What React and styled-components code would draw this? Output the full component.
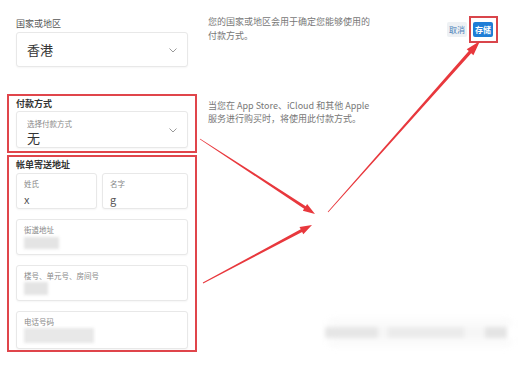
import React from 'react';
import styled, { createGlobalStyle } from 'styled-components';

const GlobalStyle = createGlobalStyle`
  html, body { margin: 0; padding: 0; background: #fff; }
  body { font-family: "Noto Sans CJK SC", "Noto Sans", sans-serif; }
`;

const Page = styled.div`
  position: relative;
  width: 521px;
  height: 365px;
  overflow: hidden;
  background: #fff;
  padding: 10px 0 0 7px;
  box-sizing: border-box;
  display: flex;
  flex-direction: column;
`;

const Row = styled.div`
  display: flex;
  align-items: flex-start;
  margin-top: ${props => props.gap || 0}px;
`;

const Section = styled.div`
  width: 190px;
  box-sizing: border-box;
  border: 2px solid ${props => (props.marked ? '#e0454b' : 'transparent')};
  padding: ${props => props.pad || '2px 7px 3px'};
  display: flex;
  flex-direction: column;
`;

const Label = styled.div`
  font-size: 9px;
  line-height: 11px;
  color: ${props => (props.strong ? '#333' : '#555')};
  font-weight: ${props => (props.strong ? 700 : 400)};
  margin-bottom: ${props => props.after || 2}px;
`;

const Box = styled.div`
  position: relative;
  height: ${props => props.h || 36}px;
  box-sizing: border-box;
  border: 1px solid #e8e8e8;
  border-radius: 3px;
  background: #fff;
  box-shadow: 0 1px 2px rgba(0, 0, 0, 0.04);
  padding: ${props => props.pad || '5px 10px'};
  display: flex;
  flex-direction: column;
  justify-content: ${props => (props.center ? 'center' : 'flex-start')};
`;

const Chevron = styled.svg`
  position: absolute;
  right: 10px;
  top: 50%;
  margin-top: -2px;
`;

const BigValue = styled.div`
  font-size: 13px;
  line-height: 14px;
  color: #333;
  margin-top: ${props => props.top || 0}px;
`;

const SmallLabel = styled.div`
  font-size: 7.5px;
  line-height: 10px;
  color: #888;
`;

const Value = styled.div`
  font-size: 11px;
  line-height: 14px;
  color: #555;
  margin-top: 3px;
`;

const Stack = styled.div`
  display: flex;
  flex-direction: column;
  gap: ${props => props.gap || 10}px;
`;

const NameRow = styled.div`
  display: grid;
  grid-template-columns: 81px 1fr;
  gap: 5px;
`;

const Desc = styled.p`
  width: 180px;
  margin: ${props => props.top || 0}px 0 0 11px;
  font-size: 9px;
  line-height: ${props => props.lh || 14}px;
  color: #777;
`;

const Actions = styled.div`
  margin: 6px 23px 0 auto;
  display: flex;
  align-items: center;
  gap: 2px;
`;

const Button = styled.button`
  border: none;
  border-radius: 2px;
  height: 15px;
  padding: 0 2px;
  font-family: inherit;
  font-size: 8px;
  line-height: 15px;
  background: ${props => (props.primary ? '#1e7dd6' : '#eef1f4')};
  color: ${props => (props.primary ? '#fff' : '#4a7fb8')};
  font-weight: ${props => (props.primary ? 700 : 400)};
`;

const Marked = styled.span`
  border: 2px solid #d9454b;
  padding: 4px 3px 4px 2px;
  display: inline-flex;
`;

const Blur = styled.div`
  width: ${props => props.w}px;
  height: ${props => props.h}px;
  margin-top: ${props => props.top || 2}px;
  background: ${props => props.bg || '#e4e4e4'};
  filter: blur(1.5px);
`;

const Watermark = styled.div`
  align-self: flex-end;
  margin: 0 6px 14px auto;
  width: 190px;
  height: 11px;
  background: linear-gradient(90deg, #e6e6e6 0 28%, #f6f6f6 28% 33%, #ebebeb 33% 73%, #f6f6f6 73% 84%, #e4e4e4 84% 96%, #fff 96%);
  filter: blur(2px);
  box-shadow: 0 -9px 8px -3px #f4f4f4, 0 9px 8px -3px #f4f4f4;
`;

const Overlay = styled.svg`
  position: absolute;
  left: 0;
  top: 0;
  pointer-events: none;
`;

function arrowPoints(x0, y0, x1, y1, w0, w1, headLen, headW) {
  const dx = x1 - x0;
  const dy = y1 - y0;
  const len = Math.hypot(dx, dy);
  const ux = dx / len;
  const uy = dy / len;
  const nx = -uy;
  const ny = ux;
  const bx = x1 - ux * headLen;
  const by = y1 - uy * headLen;
  const p = (x, y) => `${x.toFixed(1)},${y.toFixed(1)}`;
  return [
    p(x0 + nx * w0 / 2, y0 + ny * w0 / 2),
    p(bx + nx * w1 / 2, by + ny * w1 / 2),
    p(bx + nx * headW / 2, by + ny * headW / 2),
    p(x1, y1),
    p(bx - nx * headW / 2, by - ny * headW / 2),
    p(bx - nx * w1 / 2, by - ny * w1 / 2),
    p(x0 - nx * w0 / 2, y0 - ny * w0 / 2),
  ].join(' ');
}

const ChevronIcon = () => (
  <Chevron width="8" height="5" viewBox="0 0 8 5">
    <polyline points="0.5,0.5 4,4 7.5,0.5" fill="none" stroke="#9a9a9a" strokeWidth="1" />
  </Chevron>
);

const Field = ({ label, children, h }) => (
  <Box h={h} pad="5px 7px">
    <SmallLabel>{label}</SmallLabel>
    {children}
  </Box>
);

export default function App() {
  return (
    <>
      <GlobalStyle />
      <Page>
        <Row>
          <Section pad="6px 7px 4px">
            <Label after={3}>国家或地区</Label>
            <Box h={35} pad="0 10px" center>
              <BigValue>香港</BigValue>
              <ChevronIcon />
            </Box>
          </Section>
          <Desc top={5}>
            您的国家或地区会用于确定您能够使用的
            <br />
            付款方式。
          </Desc>
          <Actions>
            <Button>取消</Button>
            <Marked>
              <Button primary>存储</Button>
            </Marked>
          </Actions>
        </Row>

        <Row gap={21}>
          <Section marked>
            <Label strong>付款方式</Label>
            <Box h={37} pad="7px 10px 0">
              <SmallLabel>选择付款方式</SmallLabel>
              <BigValue top={2}>无</BigValue>
              <ChevronIcon />
            </Box>
          </Section>
          <Desc top={5} lh={13}>
            当您在 App Store、iCloud 和其他 Apple
            <br />
            服务进行购买时，将使用此付款方式。
          </Desc>
        </Row>

        <Row gap={2}>
          <Section marked pad="2px 7px 1px">
            <Label strong after={3}>帐单寄送地址</Label>
            <Stack gap={10}>
              <NameRow>
                <Field label="姓氏"><Value>x</Value></Field>
                <Field label="名字"><Value>g</Value></Field>
              </NameRow>
              <Field label="街道地址"><Blur w={35} h={16} /></Field>
              <Field label="楼号、单元号、房间号"><Blur w={24} h={18} top={1} /></Field>
              <Field label="电话号码" h={38}><Blur w={70} h={22} top={1} bg="#e8e8e8" /></Field>
            </Stack>
          </Section>
          <Watermark />
        </Row>

        <Overlay width="521" height="365" viewBox="0 0 521 365">
          <polygon fill="#e8383d" points={arrowPoints(200, 139, 315, 214, 0.8, 3, 12, 8)} />
          <polygon fill="#e8383d" points={arrowPoints(203, 283, 312, 225, 0.8, 3, 12, 8)} />
          <polygon fill="#e8383d" points={arrowPoints(328, 212, 480, 41, 0.8, 3.2, 15, 9)} />
        </Overlay>
      </Page>
    </>
  );
}
